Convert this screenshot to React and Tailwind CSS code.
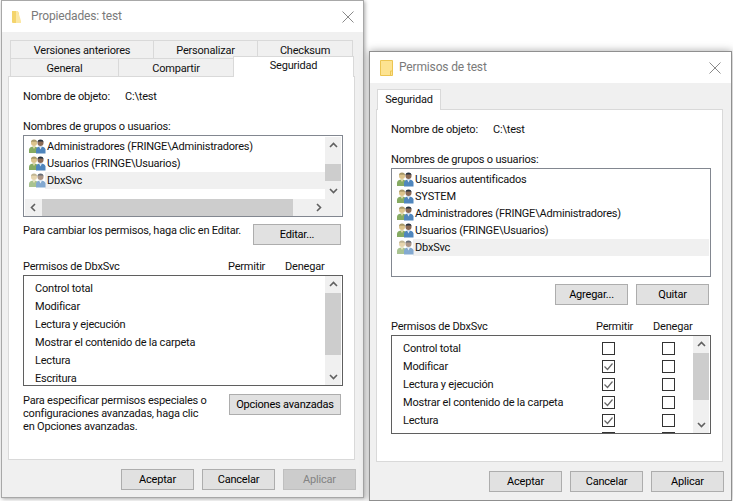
const font = '[font-family:Roboto,sans-serif]';

function GroupIcon({ dim }) {
  return (
    <svg width="17" height="15" viewBox="0 0 17 15" className={`shrink-0 ${dim ? "opacity-70" : ""}`}>
      <circle cx="5" cy="4" r="3" fill="#dcc48c" />
      <path d="M2 3.5 A3 3 0 0 1 8 3.5 L7 2.8 L3 2.8Z" fill="#a89868" />
      <path d="M0 14 V10.5 Q0.5 7.5 5 7.5 Q8.5 7.5 9 10 V14Z" fill="#86ab63" />
      <path d="M3.5 7.5 L5 10 L6.5 7.5Z" fill="#e4d7a8" />
      <circle cx="11.5" cy="4" r="3" fill="#8a6a55" />
      <path d="M8.5 3.5 A3 3 0 0 1 14.5 3.5 L13.5 2.6 L9.5 2.6Z" fill="#26323f" />
      <path d="M7 14.5 V10.5 Q7.5 7.5 11.5 7.5 Q16 7.5 16.5 10.5 V14.5Z" fill="#4f86bd" />
      <path d="M10 7.5 L11.5 10.5 L13 7.5Z" fill="#dfe8f2" />
    </svg>
  );
}

function Chev({ dir }) {
  const paths = {
    up: "M1 6 L4.5 2.5 L8 6",
    down: "M1 3 L4.5 6.5 L8 3",
    left: "M6 1 L2.5 4.5 L6 8",
    right: "M3 1 L6.5 4.5 L3 8",
  };
  return (
    <svg width="9" height="9" viewBox="0 0 9 9" className="shrink-0">
      <path d={paths[dir]} fill="none" stroke="#606060" strokeWidth="1.6" />
    </svg>
  );
}

function Btn({ w, disabled, children, className = "" }) {
  return (
    <div className={`${w} h-[21px] flex items-center justify-center whitespace-nowrap border shrink-0 ${disabled ? "bg-[#cccccc] text-[#838383] border-[#bfbfbf]" : "bg-[#e1e1e1] text-black border-[#adadad]"} ${className}`}>
      {children}
    </div>
  );
}

function UserRow({ children, selected, pad = "pl-[5px]" }) {
  return (
    <div className={`h-[17px] flex items-center ${pad}`}>
      <GroupIcon dim={selected} />
      <div className={`flex-1 h-[17px] flex items-center pl-[2px] -ml-px whitespace-nowrap ${selected ? "bg-[#f0f0f0]" : ""}`}>{children}</div>
    </div>
  );
}

function TabTop({ w, children }) {
  return <div className={`${w} h-[18px] pt-px border border-b-0 border-[#d9d9d9] bg-[#f0f0f0] flex items-center justify-center -mr-px whitespace-nowrap`}>{children}</div>;
}

function Close() {
  return (
    <svg width="12" height="12" viewBox="0 0 12 12">
      <path d="M0.5 0.5 L11.5 11.5 M11.5 0.5 L0.5 11.5" stroke="#8a8a8a" strokeWidth="1" />
    </svg>
  );
}

function Check({ on }) {
  return (
    <div className="w-[13px] h-[13px] border border-[#333333] bg-white flex items-center justify-center shrink-0">
      {on && (
        <svg width="11" height="11" viewBox="0 0 11 11">
          <path d="M1.5 5.5 L4.5 8.5 L9.5 2.5" fill="none" stroke="#666666" strokeWidth="1.2" />
        </svg>
      )}
    </div>
  );
}

function LeftWindow() {
  return (
    <div className="absolute left-[1px] top-0 w-[363px] h-[498px] bg-[#f0f0f0] border border-[#a8a8a8] flex flex-col shadow-[1px_1px_4px_rgba(0,0,0,0.35)]">
      <div className="h-[31px] bg-white flex items-center pl-[10px] pr-[9px] shrink-0">
        <svg width="10" height="14" viewBox="0 0 10 14" className="shrink-0">
          <path d="M0 1 H5 L7 3 V13 H1 Q0 13 0 12Z" fill="#f4d46c" />
          <path d="M4 1 H6 L9 11 V13 H4Z" fill="#fbe7a4" />
        </svg>
        <div className="ml-[9px] text-[12px] tracking-[-0.15px] text-[#7a7a7a] flex-1">Propiedades: test</div>
        <Close />
      </div>
      <div className="pt-[8px] pl-[8px] flex flex-col">
        <div className="flex h-[18px]">
          <TabTop w="w-[144px]">Versiones anteriores</TabTop>
          <TabTop w="w-[105px]">Personalizar</TabTop>
          <TabTop w="w-[96px]">Checksum</TabTop>
        </div>
        <div className="flex h-[18px] relative z-10">
          <TabTop w="w-[109px]">General</TabTop>
          <TabTop w="w-[116px]">Compartir</TabTop>
          <div className="w-[121px] h-[21px] -mt-[2px] bg-white border border-b-0 border-[#d9d9d9] flex justify-center relative">Seguridad</div>
        </div>
      </div>
      <div className="ml-[6px] w-[347px] h-[384px] bg-white border border-[#d9d9d9] flex flex-col pl-[14px] shrink-0">
        <div className="mt-[11px] h-[17px] flex items-center whitespace-nowrap">
          <span className="w-[102px]">Nombre de objeto:</span><span>C:\test</span>
        </div>
        <div className="mt-[13px] h-[17px] flex items-center whitespace-nowrap">Nombres de grupos o usuarios:</div>
        <div className="w-[320px] h-[82px] border border-[#828790] flex flex-col px-px pt-px">
          <div className="flex h-[62px]">
            <div className="flex-1 pt-px">
              <UserRow pad="pl-[4px]">Administradores (FRINGE\Administradores)</UserRow>
              <UserRow pad="pl-[4px]">Usuarios (FRINGE\Usuarios)</UserRow>
              <UserRow pad="pl-[4px]" selected>DbxSvc</UserRow>
            </div>
            <div className="w-[16px] h-[62px] bg-[#f0f0f0] flex flex-col">
              <div className="h-[17px] flex items-center justify-center"><Chev dir="up" /></div>
              <div className="mt-[10px] h-[17px] bg-[#cdcdcd]" />
              <div className="mt-auto h-[18px] flex items-center justify-center"><Chev dir="down" /></div>
            </div>
          </div>
          <div className="h-[17px] bg-[#f0f0f0] flex items-center">
            <div className="w-[17px] flex justify-center"><Chev dir="left" /></div>
            <div className="w-[251px] h-[17px] bg-[#cdcdcd]" />
            <div className="flex-1 flex justify-center pl-[2px]"><Chev dir="right" /></div>
          </div>
        </div>
        <div className="mt-[7px] flex items-start pr-[13px] justify-between">
          <span className="leading-[13px] whitespace-nowrap">Para cambiar los permisos, haga clic en Editar.</span>
          <Btn w="w-[88px]">Editar...</Btn>
        </div>
        <div className="mt-[13px] h-[17px] flex items-center whitespace-nowrap">
          <span className="w-[205px]">Permisos de DbxSvc</span>
          <span className="w-[57px]">Permitir</span>
          <span>Denegar</span>
        </div>
        <div className="w-[320px] h-[111px] border border-[#5f5f5f] flex pl-[11px]">
          <div className="flex-1 pt-[3px] overflow-hidden">
            {["Control total", "Modificar", "Lectura y ejecución", "Mostrar el contenido de la carpeta", "Lectura", "Escritura"].map((t) => (
              <div key={t} className="h-[18px] flex items-center whitespace-nowrap">{t}</div>
            ))}
          </div>
          <div className="w-[16px] mr-px bg-[#f0f0f0] flex flex-col">
            <div className="h-[17px] flex items-center justify-center"><Chev dir="up" /></div>
            <div className="h-[62px] bg-[#cdcdcd]" />
            <div className="mt-auto h-[17px] flex items-center justify-center"><Chev dir="down" /></div>
          </div>
        </div>
        <div className="mt-[8px] flex justify-between pr-[13px]">
          <div className="leading-[13px] whitespace-nowrap">
            Para especificar permisos especiales o<br />configuraciones avanzadas, haga clic<br />en Opciones avanzadas.
          </div>
          <Btn w="w-[112px]">Opciones avanzadas</Btn>
        </div>
      </div>
      <div className="flex justify-end gap-[8px] pr-[7px] pt-[9px]">
        <Btn w="w-[73px]">Aceptar</Btn>
        <Btn w="w-[73px]">Cancelar</Btn>
        <Btn w="w-[73px]" disabled>Aplicar</Btn>
      </div>
    </div>
  );
}

function RightWindow() {
  return (
    <div className="absolute left-[369px] top-[51px] w-[363px] h-[450px] bg-[#f0f0f0] border border-[#8f8f8f] flex flex-col shadow-[0_0_8px_rgba(0,0,0,0.35)]">
      <div className="h-[31px] bg-white flex items-center pl-[10px] pr-[10px] shrink-0">
        <svg width="13" height="16" viewBox="0 0 13 16" className="shrink-0">
          <path d="M0.5 0.5 H12.5 V15.5 H0.5Z" fill="#fde391" stroke="#ecc552" />
          <path d="M10.5 15 V11 H12.5" fill="none" stroke="#ecc552" />
        </svg>
        <div className="ml-[6px] text-[12px] tracking-[-0.15px] text-[#7a7a7a] flex-1">Permisos de test</div>
        <Close />
      </div>
      <div className="pl-[7px] pt-[6px] h-[26px] shrink-0 relative z-10">
        <div className="w-[64px] h-[21px] pb-px bg-white border border-b-0 border-[#d9d9d9] flex items-center justify-center">Seguridad</div>
      </div>
      <div className="ml-[6px] w-[347px] h-[353px] bg-white border border-[#d9d9d9] pl-[14px] flex flex-col shrink-0">
        <div className="mt-[11px] h-[17px] flex items-center whitespace-nowrap">
          <span className="w-[102px]">Nombre de objeto:</span><span>C:\test</span>
        </div>
        <div className="mt-[13px] h-[17px] flex items-center whitespace-nowrap">Nombres de grupos o usuarios:</div>
        <div className="w-[320px] h-[109px] border border-[#828790] pt-[2px] pr-[1px]">
          <UserRow>Usuarios autentificados</UserRow>
          <UserRow>SYSTEM</UserRow>
          <UserRow>Administradores (FRINGE\Administradores)</UserRow>
          <UserRow>Usuarios (FRINGE\Usuarios)</UserRow>
          <UserRow selected>DbxSvc</UserRow>
        </div>
        <div className="mt-[7px] flex justify-end gap-[8px] pr-[13px]">
          <Btn w="w-[73px]">Agregar...</Btn>
          <Btn w="w-[73px]">Quitar</Btn>
        </div>
        <div className="mt-[13px] h-[17px] flex items-center whitespace-nowrap">
          <span className="w-[205px]">Permisos de DbxSvc</span>
          <span className="w-[57px]">Permitir</span>
          <span>Denegar</span>
        </div>
        <div className="w-[320px] h-[99px] border border-[#5f5f5f] flex pl-[11px]">
          <div className="flex-1 pt-[3px] overflow-hidden">
            {[["Control total", false], ["Modificar", true], ["Lectura y ejecución", true], ["Mostrar el contenido de la carpeta", true], ["Lectura", true], ["", true]].map(([t, c], i) => (
              <div key={i} className="h-[18px] flex items-center">
                <span className="w-[199px] whitespace-nowrap">{t}</span>
                <Check on={c} />
                <span className="w-[47px]" />
                <Check />
              </div>
            ))}
          </div>
          <div className="w-[16px] mr-px bg-[#f0f0f0] flex flex-col">
            <div className="h-[17px] flex items-center justify-center"><Chev dir="up" /></div>
            <div className="h-[47px] bg-[#cdcdcd]" />
            <div className="mt-auto h-[17px] flex items-center justify-center"><Chev dir="down" /></div>
          </div>
        </div>
      </div>
      <div className="flex justify-end gap-[8px] pr-[7px] pt-[9px]">
        <Btn w="w-[73px]">Aceptar</Btn>
        <Btn w="w-[73px]">Cancelar</Btn>
        <Btn w="w-[73px]">Aplicar</Btn>
      </div>
    </div>
  );
}

export default function App() {
  return (
    <div className={`relative w-[733px] h-[501px] overflow-hidden bg-white text-[11px] tracking-[-0.2px] leading-[17px] text-[#111111] ${font}`}>
      <LeftWindow />
      <RightWindow />
    </div>
  );
}
